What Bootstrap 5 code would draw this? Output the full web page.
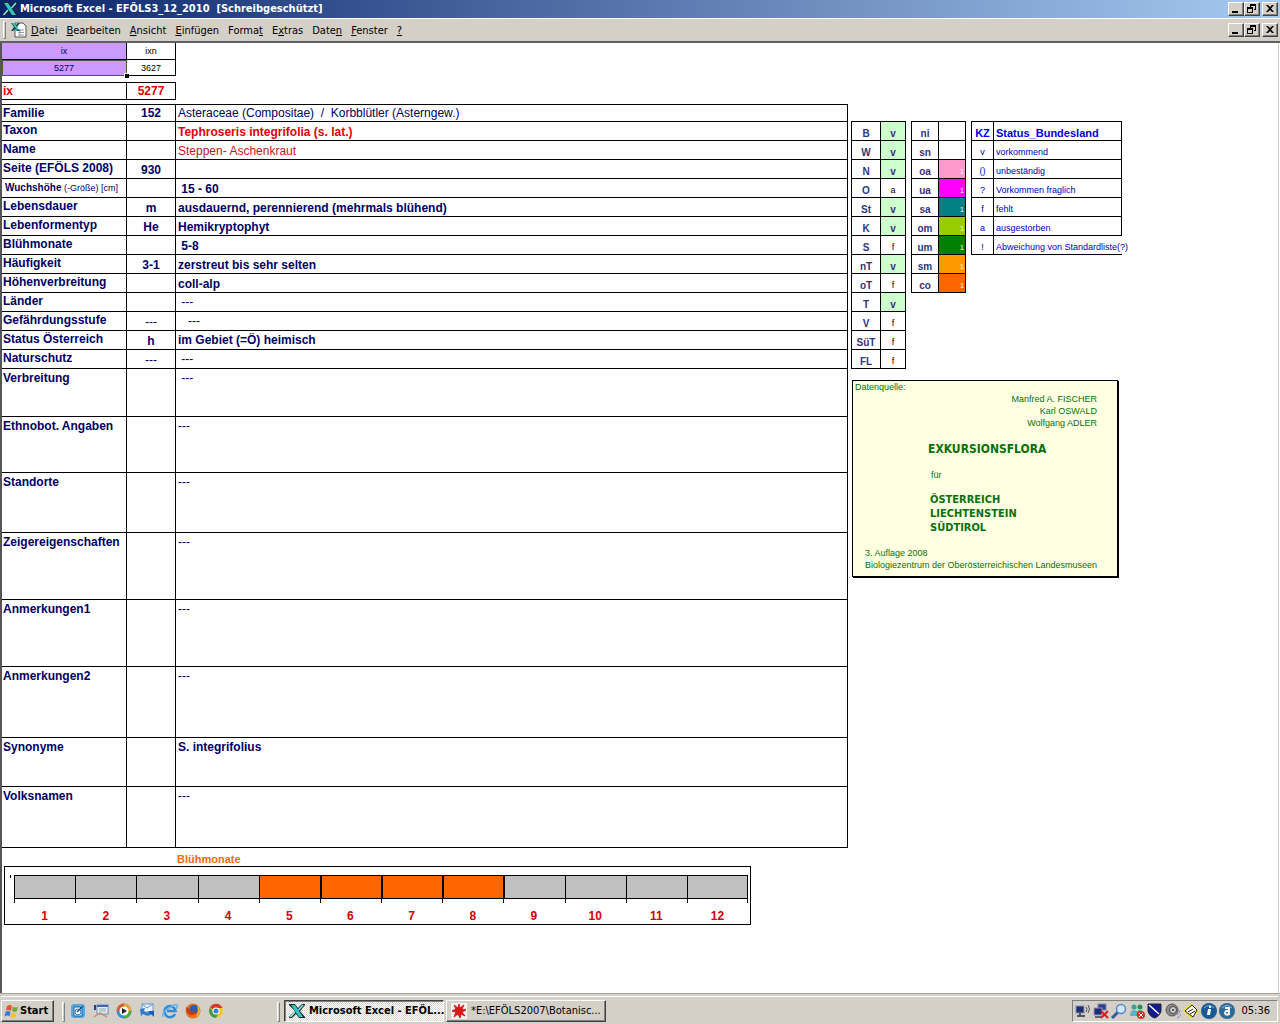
<!DOCTYPE html>
<html lang="de">
<head>
<meta charset="utf-8">
<meta name="viewport" content="width=device-width, initial-scale=1">
<title>Microsoft Excel - EFÖLS3_12_2010</title>
<link href="https://cdn.jsdelivr.net/npm/bootstrap@5.3.0/dist/css/bootstrap.min.css" rel="stylesheet">
<style>
:root{--face:#d4d0c8;--navy:#000066}
body{font-family:"Liberation Sans",Arial,sans-serif;font-size:12px;line-height:16px;background:#fff;color:#000}
.ui{font-family:"DejaVu Sans Condensed","DejaVu Sans",sans-serif;font-size:11px}
.titlebar{height:18px;background:linear-gradient(90deg,#0a246a,#a6caf0);color:#fff;padding:0 2px}
.titlebar h1{font-size:11px;line-height:18px;font-weight:700;margin:0;padding-left:2px}
.menubar{height:25px;background:var(--face);border-top:1px solid #fff;border-bottom:2px solid #606060;padding:0 2px}
.menubar a{color:#000;text-decoration:none;padding:2px 5px 0 4px}
.grip{width:3px;border:1px solid;border-color:#fff #808080 #808080 #fff;align-self:stretch;margin:2px 1px}
.wbtn,.taskbtn{background:var(--face);border:1px solid;border-color:#fff #404040 #404040 #fff;box-shadow:inset -1px -1px #808080;padding:0}
.wbtn{width:16px;height:14px;display:flex;align-items:center;justify-content:center}
.wbtn.last{margin-left:2px}
.sheet{border-left:2px solid #555;border-right:1px solid var(--face);margin-right:1px}
.xl{border-collapse:separate;border-spacing:0;table-layout:fixed;color:var(--navy)}
.xl th,.xl td{border:0 solid #000;border-width:0 1px 1px 0;padding:0 2px;white-space:nowrap;height:19px}
.head{width:174px;font-size:9px;text-align:center}
.head th,.head td{font-weight:400;height:16px;line-height:14px}
.head thead th{height:17px}
.violet{background:#cc99ff}
.picked{outline:1px solid #4b5a3c;outline-offset:-1px;position:relative}
.picked::after{content:"";position:absolute;right:-3px;bottom:-3px;width:5px;height:5px;background:#000;border:1px solid #fff;border-width:1px 0 0 1px}
.found{width:174px;border-top:1px solid #000;margin:6px 0 4px;color:#e00000;font-weight:700}
.found th,.found td{height:17px}
.facts{width:100%;border-top:1px solid #000}
.facts th{vertical-align:top;font-weight:700}
.facts th,.found th{padding-left:1px}
.facts td{vertical-align:bottom;font-weight:700}
.facts td.code{text-align:center}
.facts tr.r1 th,.facts tr.r1 td{height:17px}
.facts td.mid{vertical-align:middle}
.facts td.plain{font-weight:400}
.facts .deep th,.facts .deep td{vertical-align:top;padding-top:1px}
.h48 th{height:48px!important}.h56 th{height:56px!important}.h60 th{height:60px!important}.h67 th{height:67px!important}
.h71 th{height:71px!important}.h49 th{height:49px!important}.h61 th{height:61px!important}
.small-note{font-size:9px;font-weight:400;padding-left:2px}
.small-note b{font-size:10px}
.c1{width:125px}.c2{width:49px}
.side{width:430px;padding:78px 0 0 3px;flex:none}
.keys{border:0 solid #000;border-width:1px 0 0 1px;font-size:10px}
.keys th,.keys td{text-align:center;vertical-align:bottom;line-height:13px}
.keys th{color:#333380}
.yes{background:#ccffcc;color:#333380;font-weight:700}
.no{color:#000;font-size:9px}
.keys td.swatch{color:#fff;font-size:7px;text-align:right;padding:0 1px}
.legend{width:151px;font-size:9px}
.legend td{color:#0000c0}
.legend td+td,.legend th+th{text-align:left}
.keys.legend th{color:#0000e0}
.source{width:266px;margin:11px 0 0 1px;background:#ffffe1;border:1px solid #000;box-shadow:1px 1px #000;color:#0a700a;font-size:9px;line-height:12px;padding:1px 12px 5px 12px}
.source .from{margin-left:-10px;line-height:11px}
.source .authors{text-align:right;padding-right:8px}
.source h2{font-size:12px;line-height:16px;font-weight:700;margin:12px 0 12px 63px}
.source .fuer{margin:0 0 12px 66px}
.source .lands{font-size:11px;line-height:14px;font-weight:700;margin:0 0 12px 65px}
.months h2{font-size:11px;line-height:18px;padding-top:2px;height:18px;font-weight:700;color:#f26a0a;margin:0 0 0 175px}
.plot{margin:0 97px 0 2px;border:1px solid #000;padding:8px 2px 0 5px;color:#d40000;font-weight:700;text-align:center}
.axis{width:4px;height:3px;border-left:1px solid #000;flex:none}
.seg{height:24px;border:1px solid #000;border-right:0;background:#c0c0c0}
.seg.on{background:#ff6600}
.on2 .seg{border-left-width:2px}
.tick{height:4px;border-left:1px solid #000;margin-bottom:5px}
.month:last-child .seg,.month:last-child .tick{border-right:1px solid #000}
.taskbar{background:var(--face);border-top:1px solid #a8a59e;height:31px;padding:0 2px 0 1px}
.taskin{border-top:1px solid #fff;margin-top:2px;width:100%;padding-top:3px}
.taskbtn{height:22px;white-space:nowrap}
.start{width:53px;font-weight:700;padding-left:2px}
.quick{gap:7px;height:22px;width:211px;padding-left:5px}
.app{width:160px;text-align:left;padding-left:4px;margin-right:2px}
.app.down{border-color:#404040 #fff #fff #404040;box-shadow:inset 1px 1px #808080;background:repeating-conic-gradient(#fff 0 25%,#d9d6cf 0 50%) 0 0/2px 2px;font-weight:700}
.tray{border:1px solid;border-color:#808080 #fff #fff #808080;height:22px;width:206px;padding:0 7px 0 2px;gap:2px}
svg{display:block;flex:none}
</style>
<script src="https://cdn.jsdelivr.net/npm/bootstrap@5.3.0/dist/js/bootstrap.bundle.min.js"></script>
</head>
<body class="d-flex flex-column min-vh-100">
<svg width="0" height="0" class="position-absolute" aria-hidden="true">
<defs>
<symbol id="xl" viewBox="0 0 16 16"><path d="M0 1h6l3 4 4-4h3v1l-5 6 5 6v1h-6l-3-4-4 4H0v-1l6-6-6-6z" fill="#0b2a2a"/><path d="M2 2h4l8 12h-4z" fill="#35c4c4"/><path d="M14 2l-4.500 5M6 9l-4.500 5" stroke="#8fe6e2" stroke-width="1.500"/></symbol>
<symbol id="min" viewBox="0 0 12 10"><path d="M2 7h6v2H2z"/></symbol>
<symbol id="res" viewBox="0 0 12 10"><path d="M4 0h6v6H8V5h1V2H5v1H4zM1 3h6v6H1zm1 2v3h4V5z" fill-rule="evenodd"/></symbol>
<symbol id="cls" viewBox="0 0 12 10"><path d="M2 1h2l2 2 2-2h2L7 4.500 10 8H8L6 6 4 8H2l3-3.500z"/></symbol>
</defs>
</svg>

<header class="ui">
<div class="titlebar d-flex align-items-center">
<svg width="16" height="16"><use href="#xl"/></svg>
<h1 class="me-auto">Microsoft Excel - EFÖLS3_12_2010&nbsp; [Schreibgeschützt]</h1>
<button class="wbtn" aria-label="Minimieren"><svg width="12" height="10"><use href="#min"/></svg></button>
<button class="wbtn" aria-label="Wiederherstellen"><svg width="12" height="10"><use href="#res"/></svg></button>
<button class="wbtn last" aria-label="Schließen"><svg width="12" height="10"><use href="#cls"/></svg></button>
</div>
<nav class="menubar d-flex align-items-center">
<span class="grip"></span>
<svg width="16" height="16" viewBox="0 0 16 16" class="ms-1"><path d="M4 1h8l3 3v11H4z" fill="#fff" stroke="#555"/><path d="M7 8h6M7 10.500h6M7 13h6M9 7v7" stroke="#999"/><path d="M0 1h3l2 2 2-2h2L6 5l3 4H6L4 7 2 9H0l3-4z" fill="#0a4a4a"/><path d="M1 1h2l5 7H6z" fill="#38c8c8"/></svg>
<a href="#"><u>D</u>atei</a><a href="#"><u>B</u>earbeiten</a><a href="#"><u>A</u>nsicht</a><a href="#"><u>E</u>infügen</a><a href="#">Forma<u>t</u></a><a href="#">E<u>x</u>tras</a><a href="#">Date<u>n</u></a><a href="#"><u>F</u>enster</a><a href="#" class="me-auto"><u>?</u></a>
<button class="wbtn" aria-label="Mappe minimieren"><svg width="12" height="10"><use href="#min"/></svg></button>
<button class="wbtn" aria-label="Mappe wiederherstellen"><svg width="12" height="10"><use href="#res"/></svg></button>
<button class="wbtn last" aria-label="Mappe schließen"><svg width="12" height="10"><use href="#cls"/></svg></button>
</nav>
</header>

<main class="sheet d-flex flex-grow-1">
<section class="flex-grow-1">
<table class="xl head"><colgroup><col class="c1"><col class="c2"></colgroup>
<thead><tr><th class="violet">ix</th><th class="text-black">ixn</th></tr></thead>
<tbody><tr><td class="violet picked">5277</td><td class="text-black">3627</td></tr></tbody></table>
<table class="xl found"><colgroup><col class="c1"><col class="c2"></colgroup>
<tbody><tr><th>ix</th><td class="text-center">5277</td></tr></tbody></table>
<table class="xl facts"><colgroup><col class="c1"><col class="c2"><col></colgroup>
<tbody>
<tr class="r1"><th>Familie</th><td class="code">152</td><td class="plain">Asteraceae (Compositae)&nbsp; /&nbsp; Korbblütler (Asterngew.)</td></tr>
<tr><th>Taxon</th><td></td><td style="color:#e00000">Tephroseris integrifolia (s. lat.)</td></tr>
<tr><th>Name</th><td></td><td class="plain" style="color:#c01818">Steppen- Aschenkraut</td></tr>
<tr><th>Seite (EFÖLS 2008)</th><td class="code">930</td><td></td></tr>
<tr><th><span class="small-note"><b>Wuchshöhe</b> (-Größe) [cm]</span></th><td></td><td>&nbsp;15 - 60</td></tr>
<tr><th>Lebensdauer</th><td class="code">m</td><td>ausdauernd, perennierend (mehrmals blühend)</td></tr>
<tr><th>Lebenformentyp</th><td class="code">He</td><td>Hemikryptophyt</td></tr>
<tr><th>Blühmonate</th><td></td><td>&nbsp;5-8</td></tr>
<tr><th>Häufigkeit</th><td class="code">3-1</td><td>zerstreut bis sehr selten</td></tr>
<tr><th>Höhenverbreitung</th><td></td><td>coll-alp</td></tr>
<tr><th>Länder</th><td></td><td class="mid plain">&nbsp;---</td></tr>
<tr><th>Gefährdungsstufe</th><td class="code plain">---</td><td class="mid plain">&nbsp;&nbsp; ---</td></tr>
<tr><th>Status Österreich</th><td class="code">h</td><td class="mid">im Gebiet (=Ö) heimisch</td></tr>
<tr><th>Naturschutz</th><td class="code plain">---</td><td class="mid plain">&nbsp;---</td></tr>
<tr class="deep h48"><th>Verbreitung</th><td></td><td class="plain">&nbsp;---</td></tr>
<tr class="deep h56"><th>Ethnobot. Angaben</th><td></td><td class="plain">---</td></tr>
<tr class="deep h60"><th>Standorte</th><td></td><td class="plain">---</td></tr>
<tr class="deep h67"><th>Zeigereigenschaften</th><td></td><td class="plain">---</td></tr>
<tr class="deep h67"><th>Anmerkungen1</th><td></td><td class="plain">---</td></tr>
<tr class="deep h71"><th>Anmerkungen2</th><td></td><td class="plain">---</td></tr>
<tr class="deep h49"><th>Synonyme</th><td></td><td>S. integrifolius</td></tr>
<tr class="deep h61"><th>Volksnamen</th><td></td><td class="plain">---</td></tr>
</tbody></table>
<div class="months">
<h2>Blühmonate</h2>
<div class="plot d-flex">
<span class="axis"></span>
<div class="month flex-fill w-100"><div class="seg"></div><div class="tick"></div>1</div>
<div class="month flex-fill w-100"><div class="seg"></div><div class="tick"></div>2</div>
<div class="month flex-fill w-100"><div class="seg"></div><div class="tick"></div>3</div>
<div class="month flex-fill w-100"><div class="seg"></div><div class="tick"></div>4</div>
<div class="month flex-fill w-100"><div class="seg on"></div><div class="tick"></div>5</div>
<div class="month flex-fill w-100 on2"><div class="seg on"></div><div class="tick"></div>6</div>
<div class="month flex-fill w-100 on2"><div class="seg on"></div><div class="tick"></div>7</div>
<div class="month flex-fill w-100 on2"><div class="seg on"></div><div class="tick"></div>8</div>
<div class="month flex-fill w-100 on2"><div class="seg"></div><div class="tick"></div>9</div>
<div class="month flex-fill w-100"><div class="seg"></div><div class="tick"></div>10</div>
<div class="month flex-fill w-100"><div class="seg"></div><div class="tick"></div>11</div>
<div class="month flex-fill w-100"><div class="seg"></div><div class="tick"></div>12</div>
</div>
</div>
</section>

<aside class="side">
<div class="d-flex align-items-start" style="gap:5px">
<table class="xl keys" style="width:55px"><colgroup><col style="width:29px"><col></colgroup><tbody>
<tr><th>B</th><td class="yes">v</td></tr>
<tr><th>W</th><td class="yes">v</td></tr>
<tr><th>N</th><td class="yes">v</td></tr>
<tr><th>O</th><td class="no">a</td></tr>
<tr><th>St</th><td class="yes">v</td></tr>
<tr><th>K</th><td class="yes">v</td></tr>
<tr><th>S</th><td class="no">f</td></tr>
<tr><th>nT</th><td class="yes">v</td></tr>
<tr><th>oT</th><td class="no">f</td></tr>
<tr><th>T</th><td class="yes">v</td></tr>
<tr><th>V</th><td class="no">f</td></tr>
<tr><th>SüT</th><td class="no">f</td></tr>
<tr><th>FL</th><td class="no">f</td></tr>
</tbody></table>
<table class="xl keys" style="width:55px"><colgroup><col style="width:27px"><col></colgroup><tbody>
<tr><th>ni</th><td></td></tr>
<tr><th>sn</th><td></td></tr>
<tr><th>oa</th><td class="swatch" style="background:#ff99cc">1</td></tr>
<tr><th>ua</th><td class="swatch" style="background:#ff00ff">1</td></tr>
<tr><th>sa</th><td class="swatch" style="background:#008080">1</td></tr>
<tr><th>om</th><td class="swatch" style="background:#99cc00">1</td></tr>
<tr><th>um</th><td class="swatch" style="background:#008000">1</td></tr>
<tr><th>sm</th><td class="swatch" style="background:#ff9900">1</td></tr>
<tr><th>co</th><td class="swatch" style="background:#ff6600">1</td></tr>
</tbody></table>
<table class="xl keys legend"><colgroup><col style="width:22px"><col></colgroup>
<thead style="font-size:11px"><tr><th>KZ</th><th>Status_Bundesland</th></tr></thead><tbody>
<tr><td>v</td><td>vorkommend</td></tr>
<tr><td>()</td><td>unbeständig</td></tr>
<tr><td>?</td><td>Vorkommen fraglich</td></tr>
<tr><td>f</td><td>fehlt</td></tr>
<tr><td>a</td><td>ausgestorben</td></tr>
<tr><td>!</td><td class="border-end-0">Abweichung von Standardliste(?)</td></tr>
</tbody></table>
</div>
<div class="source">
<div class="from">Datenquelle:</div>
<div class="authors">Manfred A. FISCHER<br>Karl OSWALD<br>Wolfgang ADLER</div>
<h2 class="ui">EXKURSIONSFLORA</h2>
<div class="fuer">für</div>
<div class="lands ui">ÖSTERREICH<br>LIECHTENSTEIN<br>SÜDTIROL</div>
<div>3. Auflage 2008<br>Biologiezentrum der Oberösterreichischen Landesmuseen</div>
</div>
</aside>
</main>

<footer class="taskbar ui d-flex">
<div class="taskin d-flex align-items-start">
<button class="taskbtn start d-flex align-items-center"><svg width="16" height="16" viewBox="0 0 16 16"><path d="M3 3q3-2 5 0L7 8Q4 6 2 8z" fill="#e8542a"/><path d="M9 3.500q3 2 5 0L13 8q-3 2-5 0z" fill="#6aaa3c"/><path d="M1.500 9q3-2 5 0l-1 4.500q-2-2-5 0z" fill="#3a78d8"/><path d="M7.500 9.500q3 2 5 0l-1 4.500q-3 2-5 0z" fill="#f4c22c"/></svg>Start</button>
<span class="grip ms-2 me-0"></span>
<div class="quick d-flex align-items-center">
<svg width="16" height="16" viewBox="0 0 16 16"><rect x="1" y="1" width="14" height="14" rx="3" fill="#58a8dc"/><path d="M4 4h6l2 2v7H4z" fill="#fff" stroke="#1c5f9c"/><circle cx="8" cy="9" r="3" fill="none" stroke="#2878b8"/><path d="M7 9l6-6" stroke="#1c4f8c" stroke-width="1.500"/></svg>
<svg width="16" height="16" viewBox="0 0 16 16"><rect x="4" y="2" width="11" height="9" fill="#e4eefa" stroke="#6c8cc0"/><path d="M4 3h11" stroke="#3c64b8" stroke-width="2"/><path d="M6 6h7M6 8h7" stroke="#8aa"/><path d="M2 2v5" stroke="#223a9c" stroke-width="2"/><path d="M1 14l6-4 7 4" stroke="#c8906c" stroke-width="1.500" fill="none"/></svg>
<svg width="16" height="16" viewBox="0 0 16 16"><circle cx="8" cy="8" r="7.500" fill="#3c8ad8"/><path d="M8 .5A7.500 7.500 0 0 1 15.500 8H8z" fill="#e8a428"/><path d="M.5 8A7.500 7.500 0 0 1 8 .5V8z" fill="#e05a2c"/><path d="M8 15.500A7.500 7.500 0 0 0 15.500 8H8z" fill="#58a83c"/><circle cx="8" cy="8" r="4.500" fill="#fff"/><path d="M6 5l5 3-5 3z" fill="#222"/></svg>
<svg width="16" height="16" viewBox="0 0 16 16"><rect x="3" y="1" width="11" height="8" fill="#e8f2fc" stroke="#5c98d0"/><path d="M3 1l5 4 6-4" fill="none" stroke="#5c98d0"/><path d="M1 6l5-1-1 3q3 3 6 0l3 2q-4 5-10 1l-2 2z" fill="#2c7cd0"/><path d="M9 8h6v6z" fill="#1c5cb0"/></svg>
<svg width="16" height="16" viewBox="0 0 16 16"><path d="M13 11a5.500 5.500 0 1 1 .5-3H5" fill="none" stroke="#2f8ad8" stroke-width="2.500"/><path d="M1 14Q-1 10 7 5t8-3q1 2-1 4" fill="none" stroke="#66b4ee" stroke-width="1.500"/></svg>
<svg width="16" height="16" viewBox="0 0 16 16"><circle cx="8" cy="8" r="7.500" fill="#e8701c"/><circle cx="9" cy="6.500" r="4.500" fill="#2c5cb0"/><path d="M1 4q3 1 4 4 3 2 7 0-2 5-7 4-4-2-4-8z" fill="#c83c14"/><path d="M12 2q3 3 3 7-1 4-4 5 3-5 1-12z" fill="#f8b42c"/></svg>
<svg width="16" height="16" viewBox="0 0 16 16"><circle cx="8" cy="8" r="7" fill="#f4c828"/><path d="M8 8L2 4.400A7 7 0 0 1 14.500 5H8z" fill="#d8382c"/><path d="M1.900 4.600A7 7 0 0 0 8 15l3-5.500H6z" fill="#3ca04c"/><circle cx="8" cy="8" r="3.500" fill="#fff"/><circle cx="8" cy="8" r="2.500" fill="#3c7cd8"/></svg>
</div>
<span class="grip me-1"></span>
<button class="taskbtn app down d-flex align-items-center"><svg width="16" height="16" class="me-1"><use href="#xl"/></svg>Microsoft Excel - EFÖL...</button>
<button class="taskbtn app d-flex align-items-center me-auto"><svg width="16" height="16" viewBox="0 0 16 16" class="me-1"><rect width="16" height="16" fill="#f8f0ee"/><path d="M8 1l1 4 4-3-2 4 4 1-4 2 3 4-4-2-1 4-2-4-4 3 2-5-4-1 4-2-2-4 4 3z" fill="#d81818" stroke="#d81818"/></svg>*E:\EFÖLS2007\Botanisc...</button>
<div class="tray d-flex align-items-center">
<svg width="16" height="16" viewBox="0 0 16 16"><rect x="1" y="3" width="8" height="7" fill="#1c2c70" stroke="#8890b0"/><path d="M2 13h8M5 10v3" stroke="#555" stroke-width="2"/><path d="M11 4q2 2 0 5M13 2q3 4 0 8" fill="none" stroke="#555"/></svg>
<svg width="16" height="16" viewBox="0 0 16 16"><rect x="5" y="1" width="8" height="6" fill="#2a3c9c" stroke="#889"/><rect x="1" y="5" width="8" height="7" fill="#1c2c80" stroke="#99a"/><path d="M2 14h7" stroke="#666" stroke-width="2"/><path d="M8 8l7 7M15 8l-7 7" stroke="#d42020" stroke-width="2"/></svg>
<svg width="16" height="16" viewBox="0 0 16 16"><path d="M1 15l6-6" stroke="#34589c" stroke-width="3"/><circle cx="10" cy="6" r="4.500" fill="#cfe6fa" stroke="#5c88c8" stroke-width="1.500"/></svg>
<svg width="16" height="16" viewBox="0 0 16 16"><circle cx="5" cy="4" r="2.500" fill="#3c9c9c"/><circle cx="11" cy="4" r="2.500" fill="#2c8c5c"/><path d="M1 13q0-6 4-6t5 6z" fill="#5cb4c8"/><path d="M7 13q0-6 4-6t4 6z" fill="#3ca46c"/><circle cx="12" cy="12" r="4" fill="#d83020"/><path d="M10 10l4 4M14 10l-4 4" stroke="#fff"/></svg>
<svg width="16" height="16" viewBox="0 0 16 16"><path d="M1 1h13v7q-1 5-6.500 7Q2 13 1 8z" fill="#101c90" stroke="#223"/><path d="M2 2l10 9" stroke="#fff" stroke-width="1.500"/></svg>
<svg width="16" height="16" viewBox="0 0 16 16"><circle cx="7" cy="7" r="6" fill="#8c8c8c" stroke="#555"/><circle cx="8" cy="7" r="3.500" fill="#ccc" stroke="#444"/><circle cx="8" cy="7" r="1" fill="#333"/><path d="M12 12q3-2 3-5M12 15q3-1 4-4" fill="none" stroke="#88c"/></svg>
<svg width="16" height="16" viewBox="0 0 16 16"><path d="M8 0l8 8-8 8-8-8z" fill="#f0e020"/><path d="M2 8l7-6 5 5-4 7z" fill="#fff" stroke="#222"/><path d="M5 9l5-3M7 11l5-3" stroke="#222"/></svg>
<svg width="16" height="16" viewBox="0 0 16 16"><circle cx="8" cy="8" r="8" fill="#1c5a94"/><path d="M3 5q5-5 10 0" stroke="#7cb0d8" fill="none"/><path d="M8 3h2v2H8zM7 6h3l-1 6H6z" fill="#fff"/></svg>
<svg width="16" height="16" viewBox="0 0 16 16"><circle cx="8" cy="8" r="8" fill="#2c6898"/><path d="M3 5q5-5 10 0" stroke="#8cbcdc" fill="none"/><path d="M6 5h4v7M10 8H7q-2 2 0 3.500h3" stroke="#fff" stroke-width="1.800" fill="none"/></svg>
<span class="ms-auto">05:36</span>
</div>
</div>
</footer>
</body>
</html>
